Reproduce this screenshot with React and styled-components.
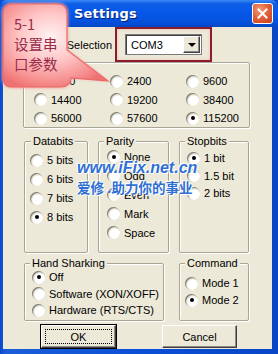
import React from "react";
import styled, { createGlobalStyle } from "styled-components";

const GlobalStyle = createGlobalStyle`
  html, body { margin: 0; padding: 0; }
  body {
    width: 278px; height: 354px; overflow: hidden;
    font-family: "Liberation Sans", Arial, sans-serif;
    font-size: 11px; color: #000;
  }
`;

const Window = styled.div`
  position: relative;
  width: 278px;
  height: 354px;
  box-sizing: border-box;
  display: flex;
  flex-direction: column;
  background: linear-gradient(90deg, #0a48cf 0%, #1c5ed8 2%, #0a4fd6 50%, #0846c6 100%);
  padding-bottom: 5px;
`;

const TitleBar = styled.div`
  height: 27px;
  flex: none;
  display: flex;
  align-items: center;
  padding-left: 74px;
  border-radius: 7px 7px 0 0;
  background: linear-gradient(180deg, #3d8bf7 0%, #0d5de6 14%, #0758e8 45%, #0552dd 78%, #0447c8 100%);
`;

const TitleText = styled.div`
  flex: 1;
  color: #fff;
  font-family: "DejaVu Sans", Verdana, sans-serif;
  font-weight: bold;
  font-size: 13px;
  letter-spacing: 0.2px;
  text-shadow: 1px 1px 0 #0a1f7a;
`;

const CloseButton = styled.div`
  width: 21px;
  height: 21px;
  margin-right: 5px;
  box-sizing: border-box;
  border: 1px solid #fff;
  border-radius: 3px;
  background: radial-gradient(circle at 35% 30%, #f09a78 0%, #e2643c 45%, #c8381a 100%);
  display: flex;
  align-items: center;
  justify-content: center;
`;

const Client = styled.div`
  flex: 1;
  margin: 0 6px 0 3px;
  background: #ece9d8;
  display: flex;
  flex-direction: column;
`;

const SelectionRow = styled.div`
  height: 35px;
  flex: none;
  display: flex;
  align-items: center;
  padding-left: 12px;
`;

const SelLabel = styled.div`
  width: 100px;
  box-sizing: border-box;
  padding-right: 3px;
  text-align: right;
  font-size: 11px;
`;

const Highlight = styled.div`
  width: 97px;
  height: 35px;
  box-sizing: border-box;
  border: 2px solid #8b1c2c;
  box-shadow: inset 0 0 3px rgba(255, 140, 140, 0.55);
  padding: 5px 0 0 8px;
`;

const Combo = styled.div`
  width: 77px;
  height: 21px;
  box-sizing: border-box;
  background: #fff;
  border: 1px solid #7a7a7a;
  box-shadow: inset 1px 1px 0 #404040;
  display: flex;
  align-items: center;
  justify-content: space-between;
  padding: 0 1px 0 5px;
`;

const DropButton = styled.div`
  width: 17px;
  height: 17px;
  box-sizing: border-box;
  background: #ece9d8;
  border: 1px solid;
  border-color: #fff #404040 #404040 #fff;
  box-shadow: inset -1px -1px 0 #888;
  display: flex;
  align-items: center;
  justify-content: center;
`;

const Arrow = styled.span`
  width: 0;
  height: 0;
  border-left: 4px solid transparent;
  border-right: 4px solid transparent;
  border-top: 4px solid #000;
`;

const Group = styled.div`
  width: ${(p) => p.$w}px;
  height: ${(p) => p.$h}px;
  margin-left: ${(p) => p.$ml || 0}px;
  margin-top: ${(p) => p.$mt || 0}px;
  flex: none;
  box-sizing: border-box;
  border: 1px solid #a8a596;
  border-radius: 2px;
  box-shadow: inset 1px 1px 0 #fff, 1px 1px 0 #fff;
`;

const GroupTitle = styled.div`
  width: fit-content;
  height: 13px;
  line-height: 13px;
  margin: -7px 0 0 ${(p) => p.$x}px;
  padding: 0 2px;
  background: #ece9d8;
`;

const Options = styled.div`
  display: grid;
  grid-template-columns: ${(p) => p.$cols || "1fr"};
  grid-auto-rows: ${(p) => p.$row}px;
  margin-top: ${(p) => p.$pt}px;
  padding-left: ${(p) => p.$pl}px;
`;

const Option = styled.div`
  display: flex;
  align-items: center;
  gap: 4px;
  white-space: nowrap;
`;

const Radio = styled.span`
  position: relative;
  width: 13px;
  height: 13px;
  flex: none;
  box-sizing: border-box;
  border-radius: 50%;
  background: radial-gradient(circle at 62% 62%, #ffffff 0%, #ffffff 42%, #e3e0d3 64%, #a9a699 100%);
  box-shadow: inset 1px 1px 1px #7d7a6e;
  &::after {
    content: "";
    display: ${(p) => (p.$on ? "block" : "none")};
    position: absolute;
    left: 4.5px;
    top: 4.5px;
    width: 4px;
    height: 4px;
    border-radius: 50%;
    background: #000;
  }
`;

const Row = styled.div`
  display: flex;
  gap: ${(p) => p.$gap}px;
  margin-left: ${(p) => p.$ml}px;
  margin-top: ${(p) => p.$mt}px;
  flex: none;
`;

const Button = styled.div`
  position: relative;
  width: 75px;
  height: 23px;
  box-sizing: border-box;
  background: #ece9d8;
  border: 1px solid;
  border-color: #fff #404040 #404040 #fff;
  box-shadow: ${(p) =>
    p.$default ? "inset -1px -1px 0 #888, 0 0 0 1px #000" : "inset -1px -1px 0 #888"};
  display: flex;
  align-items: center;
  justify-content: center;
  font-size: 11px;
  &::after {
    content: "";
    display: ${(p) => (p.$default ? "block" : "none")};
    position: absolute;
    inset: 3px;
    border: 1px dotted #000;
  }
`;

const Callout = styled.div`
  position: absolute;
  left: 0;
  top: 0;
  width: 112px;
  height: 92px;
  z-index: 5;
  pointer-events: none;
`;

const CalloutShape = styled.svg`
  position: absolute;
  left: 0;
  top: 0;
`;

const CalloutText = styled.div`
  position: relative;
  padding: 14px 0 0 14px;
  color: #9a2c4a;
  font-family: "Noto Sans CJK SC", "Liberation Sans", sans-serif;
  font-size: 14.5px;
  line-height: 20px;
`;

const Watermark = styled.div`
  position: absolute;
  left: 77px;
  top: 158px;
  z-index: 4;
  pointer-events: none;
  color: #2f6fd4;
  text-shadow: 0 0 2px #fff, 1px 1px 0 #fff, -1px -1px 0 #fff;
`;

const WmLine = styled.div`
  font-family: "Liberation Sans", Arial, sans-serif;
  font-weight: bold;
  font-style: italic;
  font-size: 16px;
  line-height: 20px;
`;

const WmCn = styled.div`
  font-family: "Noto Sans CJK SC", sans-serif;
  font-weight: bold;
  font-size: 13.5px;
  line-height: 18px;
  white-space: nowrap;
`;

const RadioList = ({ items, on }) =>
  items.map((t) => (
    <Option key={t}>
      <Radio $on={t === on} />
      <span>{t}</span>
    </Option>
  ));

export default function App() {
  const baud = ["1200", "2400", "9600", "14400", "19200", "38400", "56000", "57600", "115200"];
  return (
    <>
      <GlobalStyle />
      <Window>
        <TitleBar>
          <TitleText>Settings</TitleText>
          <CloseButton>
            <svg width="11" height="11" viewBox="0 0 11 11">
              <path d="M1.5 1.5 L9.5 9.5 M9.5 1.5 L1.5 9.5" stroke="#fff" strokeWidth="2" strokeLinecap="square" />
            </svg>
          </CloseButton>
        </TitleBar>
        <Client>
          <SelectionRow>
            <SelLabel>Port Selection</SelLabel>
            <Highlight>
              <Combo>
                <span>COM3</span>
                <DropButton>
                  <Arrow />
                </DropButton>
              </Combo>
            </Highlight>
          </SelectionRow>

          <Group $w={227} $h={66} $ml={20}>
            <GroupTitle $x={6}>Baud rate</GroupTitle>
            <Options $cols="76px 76px 73px" $row={18.5} $pt={3} $pl={10}>
              <RadioList items={baud} on="115200" />
            </Options>
          </Group>

          <Row $gap={10} $ml={21} $mt={13}>
            <Group $w={64} $h={112}>
              <GroupTitle $x={6}>Databits</GroupTitle>
              <Options $row={19} $pt={2.5} $pl={5}>
                <RadioList items={["5 bits", "6 bits", "7 bits", "8 bits"]} on="8 bits" />
              </Options>
            </Group>
            <Group $w={71} $h={112}>
              <GroupTitle $x={5}>Parity</GroupTitle>
              <Options $row={19} $pt={-1} $pl={8}>
                <RadioList items={["None", "Odd", "Even", "Mark", "Space"]} on="None" />
              </Options>
            </Group>
            <Group $w={70} $h={112}>
              <GroupTitle $x={5}>Stopbits</GroupTitle>
              <Options $row={17.5} $pt={1.5} $pl={7}>
                <RadioList items={["1 bit", "1.5 bit", "2 bits"]} on="1 bit" />
              </Options>
            </Group>
          </Row>

          <Row $gap={15} $ml={21} $mt={10}>
            <Group $w={140} $h={58}>
              <GroupTitle $x={5}>Hand Sharking</GroupTitle>
              <Options $row={16.5} $pt={-1} $pl={7}>
                <RadioList items={["Off", "Software (XON/XOFF)", "Hardware (RTS/CTS)"]} on="Off" />
              </Options>
            </Group>
            <Group $w={70} $h={58}>
              <GroupTitle $x={5}>Command</GroupTitle>
              <Options $row={17} $pt={4.5} $pl={5}>
                <RadioList items={["Mode 1", "Mode 2"]} on="Mode 2" />
              </Options>
            </Group>
          </Row>

          <Row $gap={46} $ml={38} $mt={4}>
            <Button $default>OK</Button>
            <Button>Cancel</Button>
          </Row>
        </Client>

        <Watermark>
          <WmLine>www.iFix.net.cn</WmLine>
          <WmCn>爱修 .助力你的事业</WmCn>
        </Watermark>

        <Callout>
          <CalloutShape width="112" height="92" viewBox="0 0 112 92">
            <defs>
              <radialGradient id="cg" cx="45%" cy="40%" r="65%">
                <stop offset="0%" stopColor="#fff2f2" />
                <stop offset="45%" stopColor="#ffc6c6" />
                <stop offset="85%" stopColor="#f58b8b" />
                <stop offset="100%" stopColor="#ee7272" />
              </radialGradient>
              <filter id="glow" x="-10%" y="-10%" width="120%" height="120%">
                <feGaussianBlur stdDeviation="1.5" />
              </filter>
            </defs>
            <path
              d="M12 3 H57 Q68 3 68 14 V50 L108 81 L72 78 Q71 88 60 88 H12 Q2 88 2 77 V14 Q2 3 12 3 Z"
              fill="#f7a0a0"
              filter="url(#glow)"
            />
            <path
              d="M12 4 H57 Q67 4 67 14 V50 L108 81 L71 78 Q70 87 60 87 H12 Q3 87 3 77 V14 Q3 4 12 4 Z"
              fill="url(#cg)"
              stroke="#ea6a68"
              strokeWidth="1.2"
            />
          </CalloutShape>
          <CalloutText>
            <div>5-1</div>
            <div>设置串</div>
            <div>口参数</div>
          </CalloutText>
        </Callout>
      </Window>
    </>
  );
}
